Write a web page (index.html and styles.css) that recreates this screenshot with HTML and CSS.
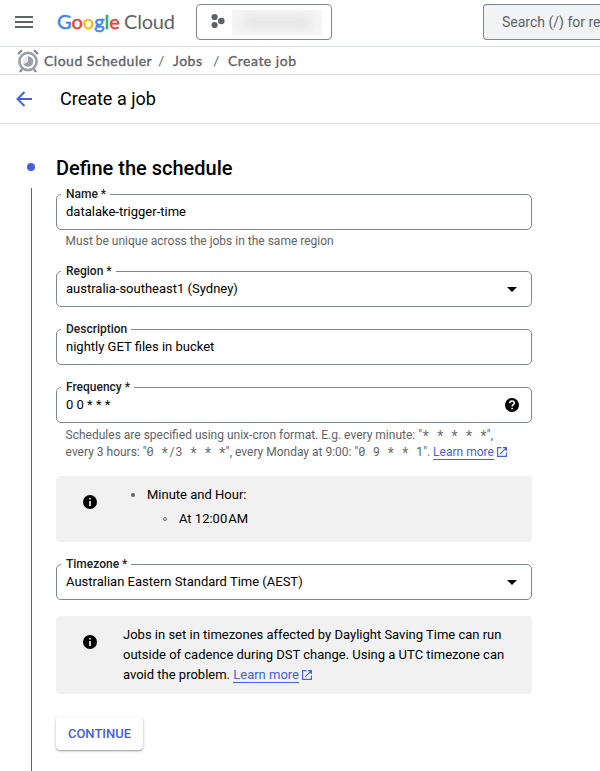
FILE: index.html
```html
<!DOCTYPE html>
<html lang="en">
<head>
<meta charset="utf-8">
<title>Create a job – Cloud Scheduler</title>
<link rel="stylesheet" href="styles.css">
</head>
<body>
<header class="topbar">
  <button class="menu" aria-label="Main menu"><svg width="18" height="12" viewBox="0 0 18 12"><path d="M0 1h18M0 6h18M0 11h18" stroke="#5f6368" stroke-width="2"/></svg></button>
  <div class="logo"><span class="google"><span class="blue cap">G</span><span class="red">o</span><span class="yellow">o</span><span class="blue">g</span><span class="green">l</span><span class="red">e</span></span><span class="cloud">Cloud</span></div>
  <button class="project" aria-label="Project">
    <svg width="14" height="16" viewBox="0 0 14 16" fill="#5f6368"><circle cx="3.6" cy="4" r="3.1"/><circle cx="3.6" cy="12" r="3.1"/><circle cx="10.3" cy="8" r="3.3"/></svg>
    <span class="redacted"><i></i></span>
  </button>
  <div class="search">Search (/) for re</div>
</header>
<nav class="crumbs">
  <svg class="clock" width="22" height="24" viewBox="0 0 22 24" fill="none">
    <path d="M1 5l4-3.700M21 5l-4-3.700" stroke="#80868b" stroke-width="2.200"/>
    <path d="M5 20l-2 3M17 20l2 3" stroke="#80868b" stroke-width="2.200"/>
    <circle cx="11" cy="12.500" r="8.600" stroke="#9aa0a6" stroke-width="2.600"/>
    <path d="M11 12.500V7.200a5.300 5.300 0 1 1-4.600 8z" fill="#9aa0a6"/>
    <path d="M11 7.200v5.300l-4.600 2.700A5.300 5.300 0 0 1 11 7.200z" fill="#e8eaed"/>
  </svg>
  <span class="c1">Cloud Scheduler</span><span class="sep">/</span><span class="c2">Jobs</span><span class="sep">/</span><span class="c3">Create job</span>
</nav>
<div class="titlebar">
  <svg width="16" height="16" viewBox="0 0 16 16" fill="none" stroke="#4461d7" stroke-width="2"><path d="M16 8H1.500M8.500 1l-7 7 7 7"/></svg>
  <h1>Create a job</h1>
</div>
<main class="stepper">
  <div class="rail"><span class="dot"></span><span class="line"></span></div>
  <section class="form">
    <h2>Define the schedule</h2>
    <div class="field"><label>Name *</label><span class="value">datalake-trigger-time</span></div>
    <p class="hint name-hint">Must be unique across the jobs in the same region</p>
    <div class="field"><label>Region *</label><span class="value">australia-southeast1 (Sydney)</span><svg class="arrow" width="10" height="5" viewBox="0 0 10 5"><path d="M0 0h10L5 5z"/></svg></div>
    <div class="field"><label>Description</label><span class="value">nightly GET files in bucket</span></div>
    <div class="field"><label>Frequency *</label><span class="value freq">0 0 * * *</span>
      <svg class="help" width="14" height="14" viewBox="0 0 14 14"><circle cx="7" cy="7" r="7"/><path d="M4.700 5.300C4.700 2.100 9.300 2.200 9.300 5c0 1.700-2.200 1.700-2.200 3.500" fill="none" stroke="#fff" stroke-width="1.500"/><path d="M6.300 9.700h1.600v1.600H6.300z" fill="#fff"/></svg>
    </div>
    <p class="hint cron-hint"><span class="l1">Schedules are specified using unix-cron format. E.g. every minute: "<code>* * * * *</code>",</span><br><span class="l2">every 3 hours: "<code>0 */3 * * *</code>", every Monday at 9:00: "<code>0 9 * * 1</code>". <a>Learn more</a><svg class="ext" width="10" height="10" viewBox="0 0 10 10"><path d="M4.500.6H.6v8.800h8.800V5.500M6 .6h3.400V4M9.200.8L3.200 6.800" fill="none" stroke="#4461d7" stroke-width="1.150"/></svg></span></p>
    <div class="notice cron">
      <svg class="info" width="14" height="14" viewBox="0 0 14 14"><circle cx="7" cy="7" r="7"/><path d="M6.200 3h1.600v1.600H6.200zM6.200 6h1.600v5H6.200z" fill="#fff"/></svg>
      <ul><li><span>Minute and Hour:</span><ul><li><span>At 12:00<b class="thin"></b>AM</span></li></ul></li></ul>
    </div>
    <div class="field"><label>Timezone *</label><span class="value">Australian Eastern Standard Time (AEST)</span><svg class="arrow" width="10" height="5" viewBox="0 0 10 5"><path d="M0 0h10L5 5z"/></svg></div>
    <div class="notice dst">
      <svg class="info" width="14" height="14" viewBox="0 0 14 14"><circle cx="7" cy="7" r="7"/><path d="M6.200 3h1.600v1.600H6.200zM6.200 6h1.600v5H6.200z" fill="#fff"/></svg>
      <p>Jobs in set in timezones affected by Daylight Saving Time can run<br>outside of cadence during DST change. Using a UTC timezone can<br>avoid the problem. <a>Learn more</a><svg class="ext" width="10" height="10" viewBox="0 0 10 10"><path d="M4.500.6H.6v8.800h8.800V5.500M6 .6h3.400V4M9.200.8L3.200 6.800" fill="none" stroke="#4461d7" stroke-width="1.150"/></svg></p>
    </div>
    <button class="continue">CONTINUE</button>
  </section>
</main>
</body>
</html>
```
FILE: styles.css
```css
* { box-sizing: border-box; }
body { margin: 0; width: 600px; height: 771px; overflow: hidden; background: #fff; color: #000; font: 13px/20px Roboto, sans-serif; }
button { font: inherit; border: 0; background: none; padding: 0; }
h1, h2, p, ul { margin: 0; padding: 0; font-weight: 400; }

.topbar { display: flex; height: 47px; border-bottom: 1px solid #dadce0; padding: 4px 0 0 15px; overflow: hidden; }
.menu { width: 42px; height: 36px; flex: none; display: flex; align-items: center; }
.logo { width: 139px; height: 36px; flex: none; line-height: 35px; font-family: Lato, sans-serif; font-size: 20px; white-space: nowrap; display: flex; }
.google { width: 67px; -webkit-text-stroke: 0.5px; letter-spacing: 0; }
.cloud { color: #5f6368; letter-spacing: -0.2px; }
.blue { color: #4285f4; }
.red { color: #ea4335; }
.yellow { color: #fbbc05; }
.green { color: #34a853; }
.project { width: 136px; height: 36px; flex: none; border: 1px solid #80868b; border-radius: 4px; display: flex; align-items: center; padding-left: 14px; gap: 7px; }
.project svg { margin-top: -2px; }
.redacted { width: 90px; height: 25px; background: #f6f6f6; padding: 6px 10px; overflow: hidden; }
.redacted i { display: block; height: 13px; background: #e4e4e4; filter: blur(6px); }
.search { margin-left: 151px; width: 117px; flex: none; height: 36px; border: 1px solid #80868b; border-right: 0; border-radius: 4px 0 0 4px; background: #f1f3f4; color: #5f6368; font-size: 14px; line-height: 34px; padding-left: 18px; white-space: nowrap; }

.crumbs { display: flex; height: 28px; border-bottom: 1px solid #dadce0; padding-left: 17px; font: 400 14px/28px Lato, sans-serif; color: #5f6368; align-items: center; white-space: nowrap; }
.clock { margin: 1px 5px 0 0; flex: none; }
.crumbs span { -webkit-text-stroke: 0.35px; letter-spacing: 0.5px; }
.c1 { width: 106px; }
.c2 { width: 32px; }
.crumbs .sep { width: 23px; text-align: center; -webkit-text-stroke: 0; }

.titlebar { display: flex; align-items: center; height: 49px; border-bottom: 1px solid #dadce0; padding-left: 16px; gap: 28px; }
h1 { font-size: 18px; line-height: 24px; }

.stepper { display: flex; height: 647px; }
.rail { width: 56px; padding: 39px 0 0 27px; display: flex; flex-direction: column; }
.dot { width: 8px; height: 8px; border-radius: 50%; background: #4461d7; }
.line { width: 1px; flex: 1; margin: 17px 0 0 4px; background: #5f6368; }
.form { width: 476px; padding-top: 32px; }
h2 { font-size: 20px; line-height: 24px; font-weight: 500; margin-bottom: 14px; }

.field { position: relative; height: 36px; border: 1px solid #80868b; border-radius: 5px; padding: 0 14px 0 9px; margin-bottom: 22px; display: flex; align-items: center; justify-content: space-between; }
.field label { position: absolute; left: 4px; top: -8px; background: #fff; padding: 0 4px 0 5px; font-size: 12px; line-height: 14px; font-weight: 500; color: #202124; }
.value { line-height: 20px; white-space: pre; margin-top: -1px; }
.help { margin-right: -2px; }
.hint { font-size: 12px; line-height: 17px; color: #5f6368; padding-left: 9.600px; white-space: nowrap; }
.name-hint { margin: -20px 0 21px; line-height: 18px; }
.cron-hint { margin: -18px 0 15px; }
code { font: 12px/14px "Roboto Mono", "DejaVu Sans Mono", monospace; }
a { color: #4461d7; border-bottom: 1px solid #4461d7; }
.ext { margin-left: 3px; vertical-align: -1px; }

.notice { background: #f1f1f1; border-radius: 4px; display: flex; padding-left: 27px; margin-bottom: 22px; }
.info { flex: none; margin-top: 19px; }
.cron { height: 66px; }
.cron ul { list-style: none; padding-top: 7px; }
.cron > ul { margin-left: 34px; }
.cron li { line-height: 24px; }
.cron li > span::before { content: ""; display: inline-block; width: 4px; height: 4px; border-radius: 50%; background: #5f6368; margin: 0 12px 2px 0; }
.cron ul ul { padding: 0 0 0 32px; }
.cron ul ul li > span::before { box-sizing: border-box; background: none; border: 1px solid #5f6368; }
.thin { display: inline-block; width: 1px; }
.dst { height: 78px; margin: -6px 0 23px; }
.dst p { margin-left: 26px; padding-top: 9px; white-space: nowrap; }
.continue { width: 87px; height: 33px; border-radius: 4px; color: #4461d7; font-weight: 500; box-shadow: 0 1px 3px rgba(0,0,0,.28), 0 1px 1px rgba(0,0,0,.18); }
```
